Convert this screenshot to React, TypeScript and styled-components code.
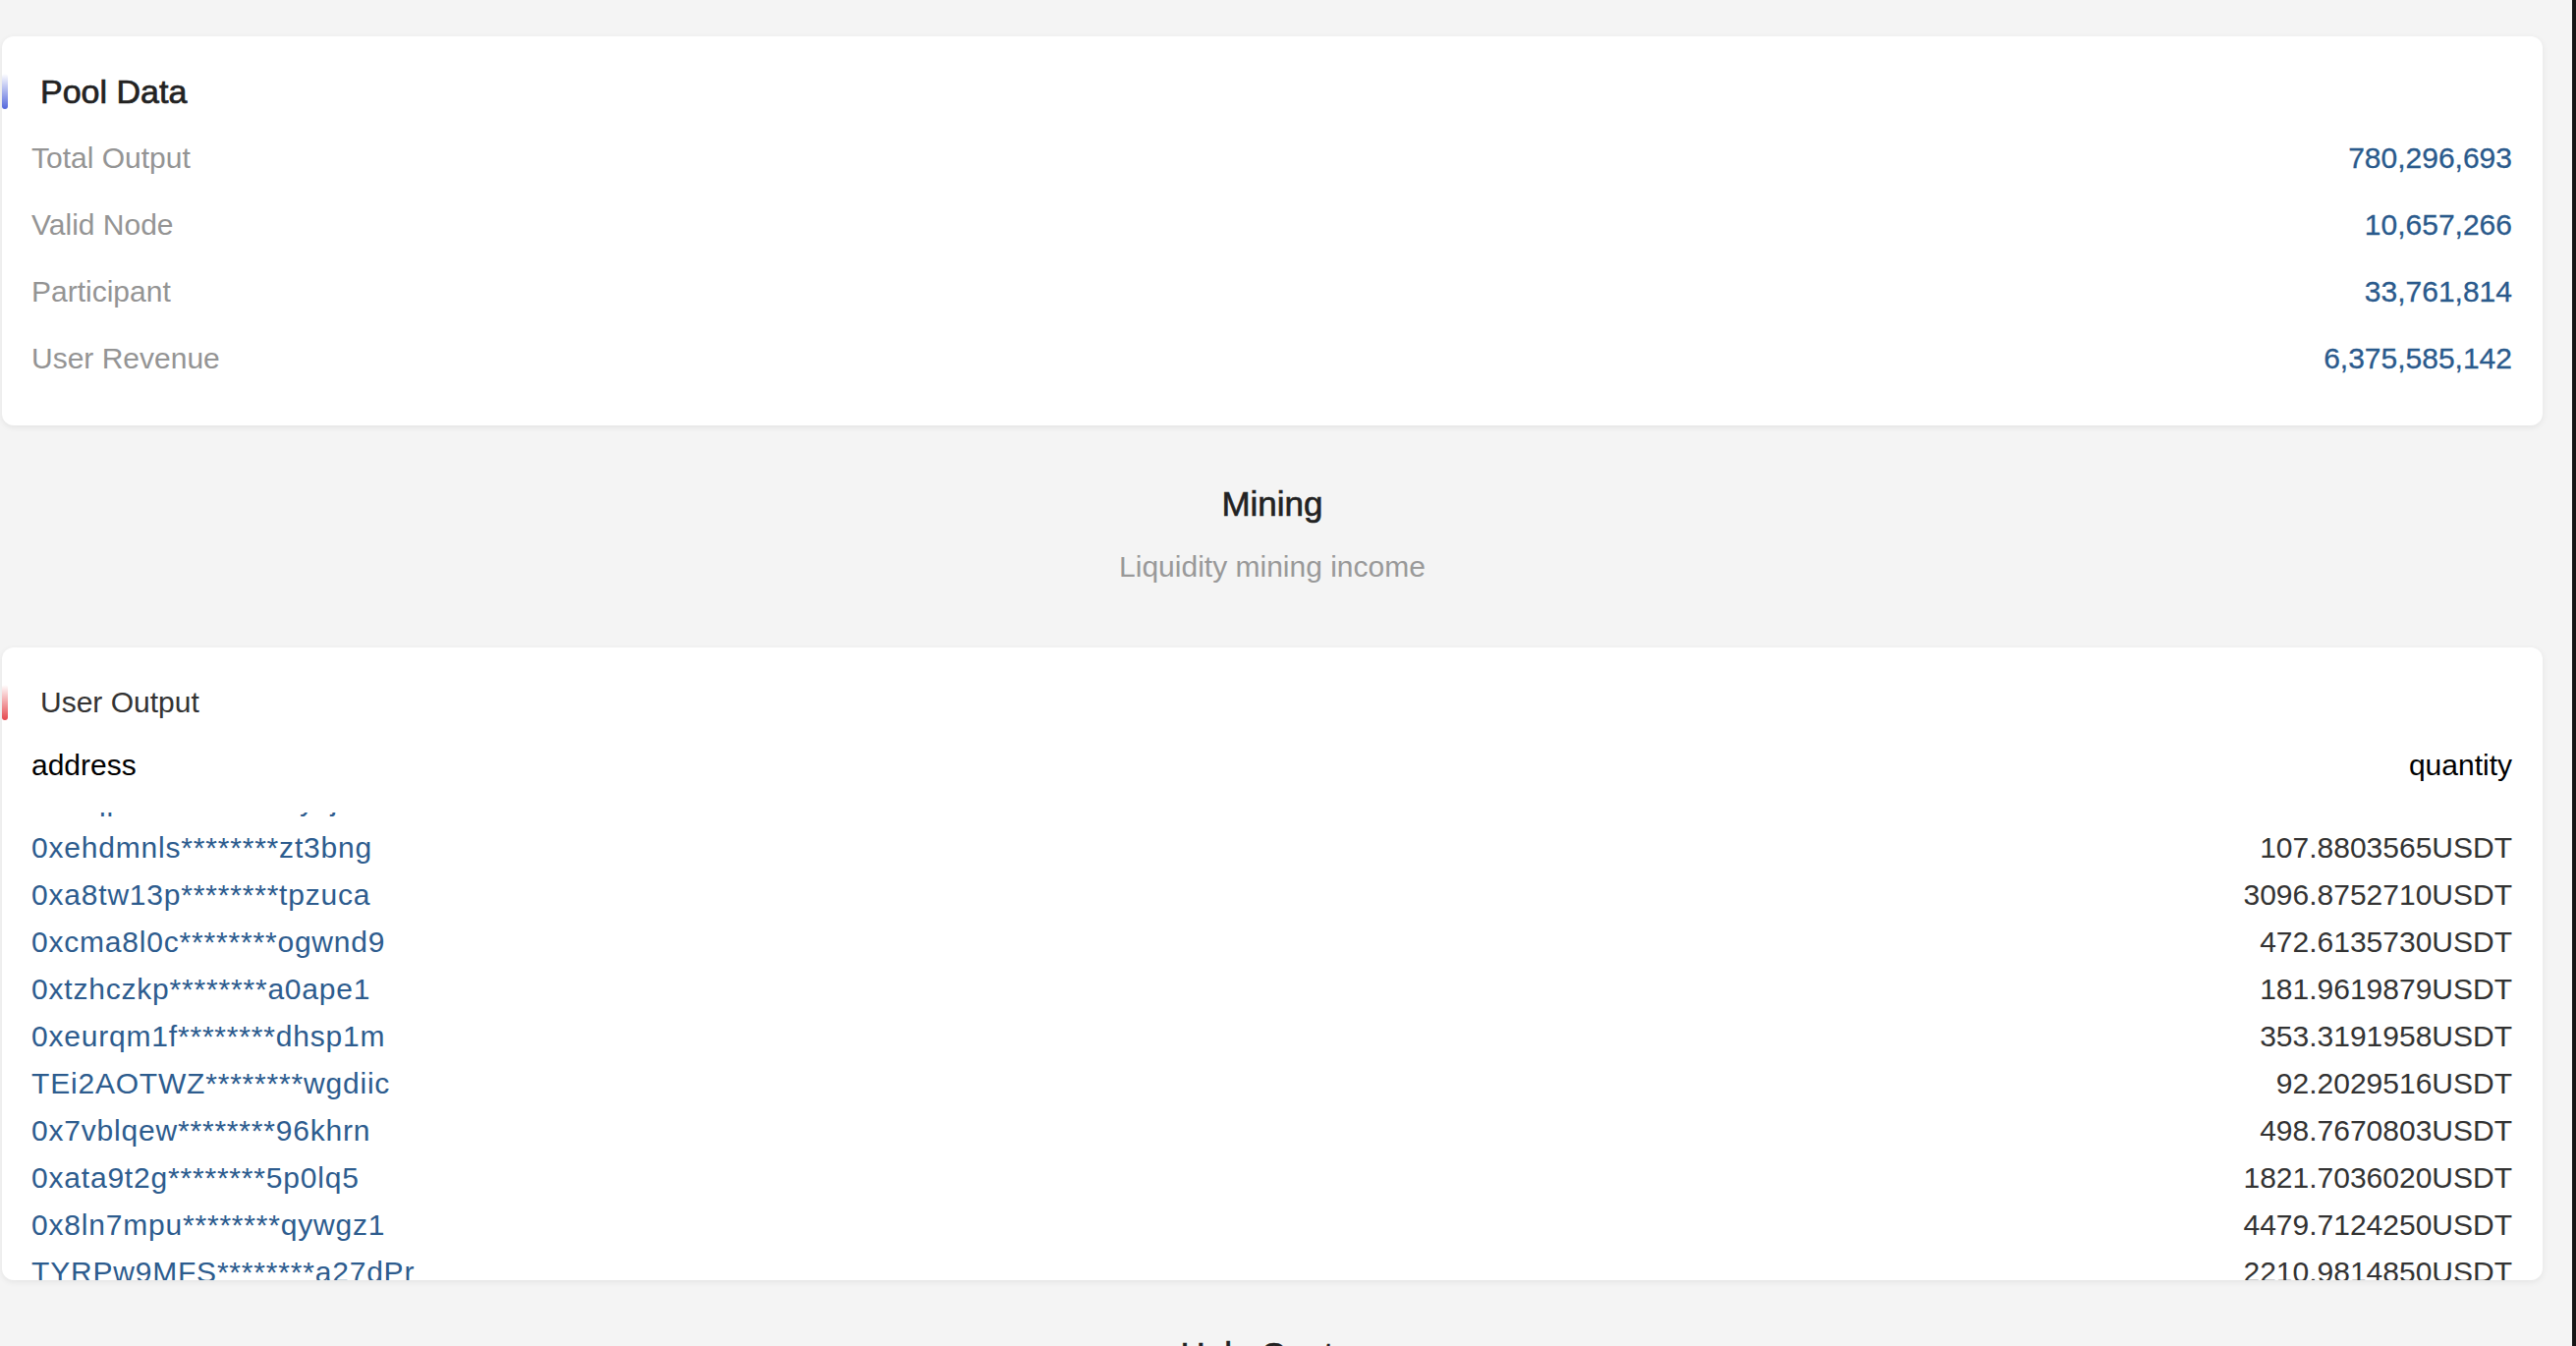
import React from 'react';
import styled, {createGlobalStyle} from 'styled-components';

const GlobalStyle = createGlobalStyle`
    html, body {
        margin:0;
        padding:0;
        height:100%;
        overflow:hidden;
        background:#f4f4f4;
    }
    body {
        font-family:"Liberation Sans", Arial, sans-serif;
    }
`;

const Screen = styled.div`
    display:flex;
    height:100vh;
    overflow:hidden;
`;
const Page = styled.main`
    flex:1;
    min-width:0;
    padding:37px 30px 0 2px;
    overflow:hidden;
    background:#f4f4f4;
`;
const WindowEdge = styled.div`
    flex:none;
    width:4px;
    background:#151515;
`;

const Card = styled.section<{tight?:boolean}>`
    background:#fff;
    border-radius:12px;
    box-shadow:0 2px 6px rgba(0,0,0,0.07);
    padding:36px 31px ${({tight})=> tight ? '0' : '34px'} 30px;
`;

const TitleRow = styled.div`
    display:flex;
    align-items:center;
    height:40px;
    margin-left:-30px;
`;
const Accent = styled.span<{tone:string}>`
    width:6px;
    height:36px;
    border-radius:3px;
    background:linear-gradient(to bottom, #fff 0%, ${({tone})=>tone} 100%);
`;
const CardTitle = styled.h2<{strong?:boolean}>`
    margin:0 0 0 33px;
    font-size:${({strong})=> strong ? '34px' : '30px'};
    font-weight:400;
    line-height:40px;
    color:${({strong})=> strong ? '#222' : '#333'};
    -webkit-text-stroke:${({strong})=> strong ? '0.7px #222' : '0'};
`;

const StatList = styled.div`
    margin-top:14px;
`;
const StatRow = styled.div`
    display:flex;
    justify-content:space-between;
    height:68px;
    line-height:68px;
    font-size:30px;
`;
const StatLabel = styled.span`
    color:#949494;
`;
const StatValue = styled.span`
    color:#2a5a8c;
    -webkit-text-stroke:0.3px #2a5a8c;
`;

const Intro = styled.div<{last?:boolean}>`
    text-align:center;
    padding:56px 0 ${({last})=> last ? '0' : '62px'};
`;
const IntroTitle = styled.h3`
    margin:0;
    font-size:35px;
    font-weight:400;
    line-height:48px;
    color:#222;
    -webkit-text-stroke:0.6px #222;
`;
const IntroText = styled.p`
    margin:20px 0 0;
    font-size:30px;
    line-height:40px;
    color:#999;
`;

const TableHead = styled.div`
    display:flex;
    justify-content:space-between;
    margin-top:20px;
    height:48px;
    line-height:48px;
    font-size:30px;
    color:#000;
`;
const Scroller = styled.div`
    margin:24px 0 -4px;
    height:476px;
    overflow:hidden;
`;
const ScrollInner = styled.div<{offset:number}>`
    margin-top:${({offset})=> -offset}px;
`;
const OutputRow = styled.div`
    display:flex;
    justify-content:space-between;
    height:48px;
    line-height:48px;
    font-size:30px;
`;
const Address = styled.span`
    color:#2d5c8e;
    letter-spacing:0.8px;
`;
const Amount = styled.span`
    color:#333;
`;

const poolData = [
    ['Total Output', '780,296,693'],
    ['Valid Node', '10,657,266'],
    ['Participant', '33,761,814'],
    ['User Revenue', '6,375,585,142'],
];

const outputs = [
    ['0xmqp3nk7r********yxj5e', '563.2104577USDT'],
    ['0xehdmnls********zt3bng', '107.8803565USDT'],
    ['0xa8tw13p********tpzuca', '3096.8752710USDT'],
    ['0xcma8l0c********ogwnd9', '472.6135730USDT'],
    ['0xtzhczkp********a0ape1', '181.9619879USDT'],
    ['0xeurqm1f********dhsp1m', '353.3191958USDT'],
    ['TEi2AOTWZ********wgdiic', '92.2029516USDT'],
    ['0x7vblqew********96khrn', '498.7670803USDT'],
    ['0xata9t2g********5p0lq5', '1821.7036020USDT'],
    ['0x8ln7mpu********qywgz1', '4479.7124250USDT'],
    ['TYRPw9MFS********a27dPr', '2210.9814850USDT'],
    ['0x5kd2wra********m8cfe0', '736.4420918USDT'],
];

const App:React.FC = () => {
    return <Screen>
        <GlobalStyle />
        <Page>
            <Card>
                <TitleRow>
                    <Accent tone="#5468dc" />
                    <CardTitle strong>Pool Data</CardTitle>
                </TitleRow>
                <StatList>
                    {poolData.map(([label, value]) =>
                        <StatRow key={label}>
                            <StatLabel>{label}</StatLabel>
                            <StatValue>{value}</StatValue>
                        </StatRow>
                    )}
                </StatList>
            </Card>

            <Intro>
                <IntroTitle>Mining</IntroTitle>
                <IntroText>Liquidity mining income</IntroText>
            </Intro>

            <Card tight>
                <TitleRow>
                    <Accent tone="#e5484d" />
                    <CardTitle>User Output</CardTitle>
                </TitleRow>
                <TableHead>
                    <span>address</span>
                    <span>quantity</span>
                </TableHead>
                <Scroller>
                    <ScrollInner offset={36}>
                        {outputs.map(([addr, qty]) =>
                            <OutputRow key={addr}>
                                <Address>{addr}</Address>
                                <Amount>{qty}</Amount>
                            </OutputRow>
                        )}
                    </ScrollInner>
                </Scroller>
            </Card>

            <Intro last>
                <IntroTitle>Help Center</IntroTitle>
                <IntroText>Frequently asked questions</IntroText>
            </Intro>
        </Page>
        <WindowEdge />
    </Screen>;
}

export default App;
